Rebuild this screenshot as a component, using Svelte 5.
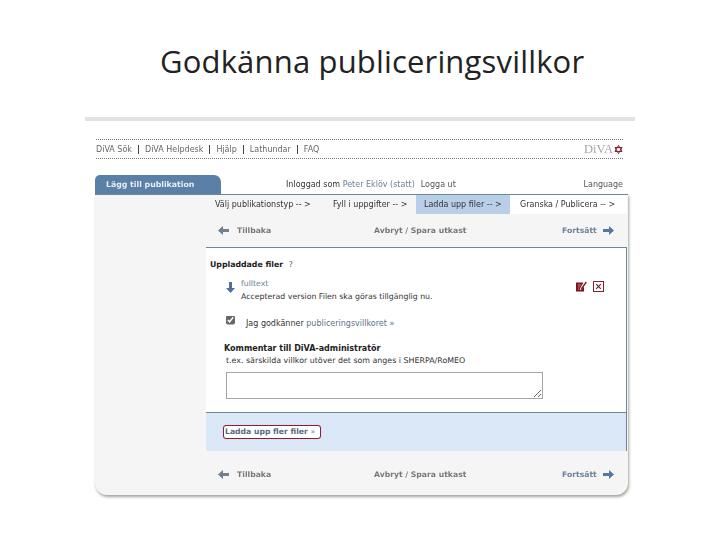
<script>
  const nav = ['DiVA Sök', 'DiVA Helpdesk', 'Hjälp', 'Lathundar', 'FAQ'];
  const steps = [
    { label: 'Välj publikationstyp -- >', state: '' },
    { label: 'Fyll i uppgifter -- >', state: '' },
    { label: 'Ladda upp filer -- >', state: 'active' },
    { label: 'Granska / Publicera -- >', state: 'next' }
  ];
</script>

{#snippet arrow(dir, color)}
  <svg class="arrow" width="11" height="9" viewBox="0 0 11 9">
    {#if dir === 'left'}
      <path d="M0 4.5 5 0v3h6v3H5v3z" fill={color} />
    {:else}
      <path d="M11 4.5 6 0v3H0v3h6v3z" fill={color} />
    {/if}
  </svg>
{/snippet}

{#snippet actions()}
  <div class="actions">
    <span class="act back">{@render arrow('left', '#6f7f8f')}<span>Tillbaka</span></span>
    <span class="act mid">Avbryt / Spara utkast</span>
    <span class="act fwd"><span>Fortsätt</span>{@render arrow('right', '#55789f')}</span>
  </div>
{/snippet}

<div class="page">
  <h1>Godkänna publiceringsvillkor</h1>
  <div class="rule"></div>

  <div class="shot">
    <div class="topnav">
      <div class="links">
        {#each nav as item, i}
          {#if i > 0}<span class="sep"></span>{/if}
          <span>{item}</span>
        {/each}
      </div>
      <div class="logo">DiVA<svg width="9" height="9" viewBox="0 0 10 10"><path d="M5 .5 8.9 7.2H1.1zM5 9.5 1.1 2.8h7.8z" fill="none" stroke="#8c1d2a" stroke-width="1.1" /></svg></div>
    </div>

    <div class="tabrow">
      <div class="tab">Lägg till publikation</div>
      <div class="login">
        <span>Inloggad som <em>Peter Eklöv (statt)</em></span>
        <span class="logout">Logga ut</span>
      </div>
      <div class="lang">Language</div>
    </div>

    <div class="panel">
      <div class="side"></div>
      <div class="main">
        <div class="steps">
          {#each steps as s}
            <div class="step {s.state}">{s.label}</div>
          {/each}
        </div>

        {@render actions()}

        <div class="card">
          <h2>Uppladdade filer <span class="q">?</span></h2>
          <div class="file">
            <svg class="down" width="9" height="11" viewBox="0 0 9 11"><path d="M4.5 11 0 6h3V0h3v6h3z" fill="#4f7299" /></svg>
            <div class="filetext">
              <div class="fname">fulltext</div>
              <div>Accepterad version Filen ska göras tillgänglig nu.</div>
            </div>
            <div class="tools">
              <svg width="11" height="11" viewBox="0 0 11 11"><path d="M0 1.5h7.5L4 7.5l-.3 1.6 1.7-.6L8 5.5v5H0z" fill="#7d1420" /><path d="M2 4h3M2 6h1.5M2 8h1" stroke="#e8c8c8" stroke-width=".7" /><path d="m4.8 7.6 5-7 1 .8-5 7z" fill="#7d1420" /></svg>
              <svg width="11" height="11" viewBox="0 0 11 11"><rect x=".5" y=".5" width="10" height="10" fill="none" stroke="#8a1f2c" /><path d="m3.2 3.2 4.6 4.6M7.8 3.2 3.2 7.8" stroke="#6a2630" stroke-width="1.2" /></svg>
            </div>
          </div>

          <div class="agree">
            <input type="checkbox" checked />
            <span>Jag godkänner <a href="#terms">publiceringsvillkoret »</a></span>
          </div>

          <div class="comment">
            <label for="c">Kommentar till DiVA-administratör</label>
            <div class="hint">t.ex. särskilda villkor utöver det som anges i SHERPA/RoMEO</div>
            <textarea id="c"></textarea>
          </div>
        </div>

        <div class="upload">
          <span class="btn">Ladda upp fler filer <span class="raquo">»</span></span>
        </div>

        {@render actions()}
      </div>
    </div>
  </div>
</div>

<style>
  :global(body) {
    margin: 0;
    background: #fff;
  }
  .page {
    width: 720px;
    height: 540px;
    box-sizing: border-box;
    overflow: hidden;
    font-family: "DejaVu Sans", sans-serif;
    font-size: 8px;
    color: #333;
    display: flex;
    flex-direction: column;
  }
  h1 {
    margin: 0;
    padding: 41px 0 0 160px;
    height: 75px;
    box-sizing: border-box;
    font-family: "Open Sans", sans-serif;
    font-weight: 400;
    font-size: 31px;
    letter-spacing: 0.17px;
    line-height: 40px;
    color: #222;
  }
  .rule {
    height: 4px;
    margin: 42px 85px 0;
    background: #e2e2e2;
  }
  .shot {
    padding: 18px 92px 0 95px;
    display: flex;
    flex-direction: column;
    filter: blur(0.3px);
  }
  .topnav {
    margin: 0 5px 0 1px;
    height: 20px;
    box-sizing: border-box;
    border-top: 1px dotted #777;
    border-bottom: 1px dotted #777;
    display: flex;
    align-items: center;
    justify-content: space-between;
    color: #666;
  }
  .links {
    display: flex;
    align-items: center;
    gap: 6px;
  }
  .sep {
    width: 1px;
    height: 9px;
    background: #444;
  }
  .logo {
    display: flex;
    align-items: center;
    gap: 1px;
    font-family: "Liberation Serif", serif;
    font-size: 12.5px;
    color: #a5a5a5;
  }
  .tabrow {
    margin-top: 16px;
    height: 19px;
    display: flex;
    align-items: center;
  }
  .tab {
    width: 126px;
    height: 19px;
    box-sizing: border-box;
    padding: 0 0 0 11px;
    line-height: 19px;
    background: #5a80a8;
    border-radius: 5px 7px 0 0;
    color: #e6edf4;
    font-weight: 700;
    font-size: 7.8px;
    white-space: nowrap;
  }
  .login {
    margin-left: 65px;
    display: flex;
    gap: 6px;
    color: #333;
  }
  .login em {
    font-style: normal;
    color: #6f8296;
  }
  .logout {
    color: #555;
  }
  .lang {
    margin-left: auto;
    padding-right: 5px;
    color: #555;
  }
  .panel {
    width: 533px;
    height: 301px;
    display: flex;
    background: #f5f5f5;
    border-top: 1px solid #6f8598;
    box-sizing: border-box;
    border-radius: 0 0 12px 12px;
    box-shadow: 1px 2px 3px #a5a59b;
  }
  .side {
    width: 111px;
    flex: none;
  }
  .main {
    flex: 1;
    min-width: 0;
    display: flex;
    flex-direction: column;
  }
  .steps {
    height: 19px;
    display: flex;
    margin-right: 1px;
    flex: none;
    color: #333;
  }
  .step {
    line-height: 19px;
    box-sizing: border-box;
    white-space: nowrap;
  }
  .step:nth-child(1) { width: 127px; padding-left: 9px; }
  .step:nth-child(2) { width: 83px; }
  .step.active {
    width: 94px;
    background: #b9cfe8;
    padding-left: 8px;
  }
  .step.next {
    width: 117px;
    background: #fff;
    padding-left: 10px;
  }
  .actions {
    height: 33px;
    display: flex;
    align-items: center;
    font-weight: 700;
    font-size: 7.7px;
    color: #777;
    padding-left: 12px;
    flex: none;
  }
  .act {
    display: flex;
    align-items: center;
    gap: 8px;
  }
  .back { width: 156px; }
  .mid { width: 188px; }
  .fwd {
    color: #6f8296;
    gap: 6px;
  }
  .card {
    height: 165px;
    flex: none;
    margin-right: 1px;
    box-sizing: border-box;
    background: #fff;
    border-top: 1px solid #6f8598;
    border-right: 1px solid #6f8598;
    padding: 12px 0 0 4px;
  }
  h2 {
    margin: 0;
    font-size: 7.8px;
    line-height: 10px;
    font-weight: 700;
    color: #222;
  }
  .q {
    margin-left: 3px;
    color: #555;
    font-weight: 400;
  }
  .file {
    display: flex;
    margin-top: 7px;
    padding-left: 16px;
    line-height: 13px;
  }
  .down { margin-top: 5px; flex: none; }
  .filetext {
    margin-left: 6px;
    width: 335px;
    flex: none;
    font-size: 7.8px;
  }
  .fname { color: #6f8296; }
  .tools {
    display: flex;
    gap: 6px;
    margin-top: 4px;
  }
  .agree {
    display: flex;
    align-items: center;
    gap: 11px;
    margin-top: 12px;
    padding-left: 16px;
    height: 16px;
  }
  .agree input {
    width: 9px;
    height: 9px;
    margin: 0;
    accent-color: #666;
    transform: translateY(-3.5px);
  }
  .agree a {
    color: #5b7188;
    text-decoration: none;
  }
  .comment {
    margin-top: 13px;
    padding-left: 14px;
    display: flex;
    flex-direction: column;
  }
  label {
    font-weight: 700;
    color: #222;
    line-height: 10px;
  }
  .hint {
    margin-top: 2px;
    padding-left: 2px;
    line-height: 10px;
    font-size: 7.9px;
  }
  textarea {
    display: block;
    width: 317px;
    height: 27px;
    box-sizing: border-box;
    margin: 6px 0 0 2px;
    padding: 0;
    border: 1px solid #a5a5a5;
    background: #fff;
  }
  .upload {
    height: 39px;
    flex: none;
    margin-right: 1px;
    box-sizing: border-box;
    background: #dbe8f8;
    border-top: 1px solid #6f8598;
    border-right: 1px solid #6f8598;
    display: flex;
    align-items: center;
    padding-left: 17px;
  }
  .btn {
    height: 14px;
    box-sizing: border-box;
    padding: 0 1px;
    line-height: 12px;
    width: 98px;
    white-space: nowrap;
    overflow: hidden;
    background: #fff;
    border: 1px solid #8c1d3a;
    border-radius: 3px;
    font-weight: 700;
    font-size: 7.7px;
    color: #5b6b7c;
    box-shadow: 0 0 1px #c98;
  }
  .raquo {
    font-weight: 400;
    color: #888;
  }
  .upload + .actions {
    height: 44px;
    box-sizing: border-box;
    padding-top: 2px;
  }
</style>
